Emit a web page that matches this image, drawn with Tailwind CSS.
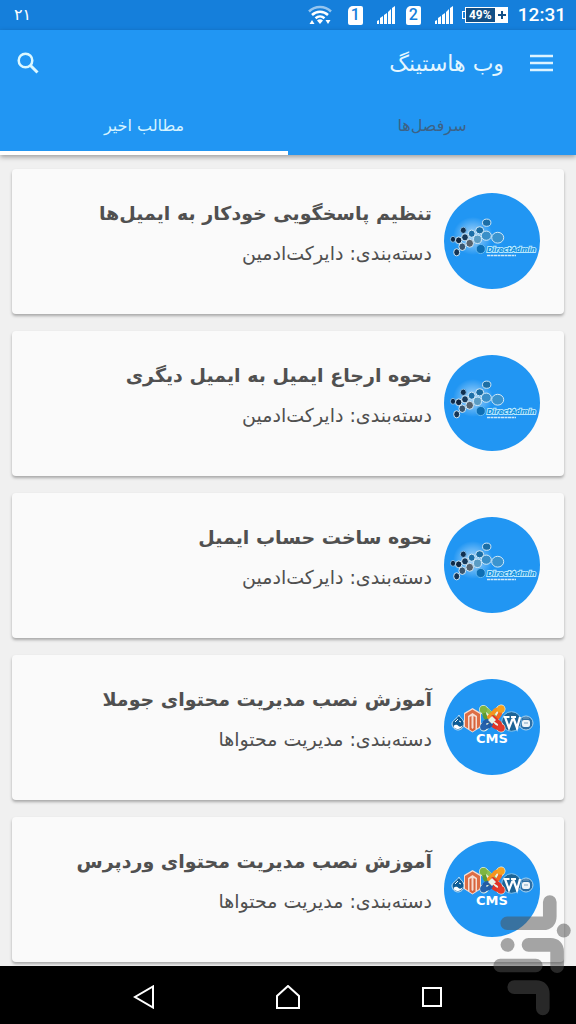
<!DOCTYPE html>
<html lang="fa" dir="rtl">
<head>
    <meta charset="UTF-8">
    <meta name="viewport" content="width=device-width, initial-scale=1.0">
    <title>وب هاستینگ</title>
    <script src="https://cdn.jsdelivr.net/npm/@tailwindcss/browser@4"></script>
</head>
<body class="bg-[#f0f0f0] font-['DejaVu_Sans',sans-serif] text-[#505050]">
    <!-- Shared drawings -->
    <svg class="absolute size-0" aria-hidden="true">
        <defs>
            <radialGradient id="glow">
                <stop offset="0" stop-color="#fff" stop-opacity=".65"/>
                <stop offset="1" stop-color="#fff" stop-opacity="0"/>
            </radialGradient>
        </defs>
        <symbol id="signal" viewBox="0 0 18 18">
            <path fill="#fff" d="M0 18v-3l2-1v4zM3 18v-6l3-2v8zM7 18V9l3-2v11zM11 18V6l3-3v15zM15 18V2l3-2v18z"/>
        </symbol>
        <symbol id="directadmin" viewBox="0 0 96 96">
            <ellipse cx="29" cy="43" rx="20" ry="19" fill="url(#glow)"/>
            <g stroke="#cfe8f8" stroke-width="1">
                <ellipse cx="42.700" cy="29.700" rx="4.200" ry="3.600" fill="#1c6ea6"/>
                <ellipse cx="35.700" cy="37.300" rx="4" ry="3.600" fill="#1b6da4"/>
                <ellipse cx="19.300" cy="37.300" rx="3" ry="3.200" fill="#12304f" stroke="#7fb9e6"/>
                <ellipse cx="27.700" cy="40.700" rx="3.400" ry="3.600" fill="#1d6fa8"/>
                <ellipse cx="42.300" cy="42.700" rx="5" ry="4.600" fill="#3a8fc8"/>
                <ellipse cx="53.700" cy="44.700" rx="6" ry="5.400" fill="#3b94cf"/>
                <ellipse cx="21" cy="44.300" rx="3.400" ry="3.600" fill="#17395a"/>
                <ellipse cx="33.500" cy="46.300" rx="4" ry="4.200" fill="#5a9cc4"/>
                <ellipse cx="9" cy="46.300" rx="2.600" ry="3" fill="#0f2947" stroke="#7fb9e6"/>
                <ellipse cx="14.700" cy="47.300" rx="3.200" ry="3.400" fill="#0f2642"/>
                <ellipse cx="25.700" cy="50.300" rx="3.800" ry="4" fill="#55626e"/>
                <ellipse cx="18.300" cy="53.700" rx="3.400" ry="3.800" fill="#38556f"/>
                <ellipse cx="12.700" cy="59.300" rx="3" ry="3.600" fill="#153454"/>
                <ellipse cx="36.700" cy="56" rx="4.600" ry="4.600" fill="#0e6fb4" stroke="#63b9f2"/>
            </g>
            <path d="M43 62.500h29" stroke="#cfe8f8" stroke-width="1.500" stroke-dasharray="3 .5"/>
        </symbol>
        <symbol id="cms" viewBox="0 0 96 96">
            <!-- Drupal -->
            <path d="M15 36c1 3 5 4 5 9a6 6 0 0 1-12 0c0-4 5-5 7-9z" fill="#0d5c96" stroke="#bfe0f7" stroke-width="1"/>
            <path d="M9.500 47c2-2 4-1 5 0s3 1 4-1c0 3-3 4-5 4s-4-1-4-3z" fill="#fff"/>
            <path d="M11 43l3-3M15 42l2 1" stroke="#fff" stroke-width="1"/>
            <!-- Database -->
            <circle cx="82" cy="44" r="7" fill="#2c6fa6" stroke="#a9d5f3" stroke-width="1"/>
            <rect x="78" y="41" width="8" height="7" rx="2" fill="#eef4f8"/>
            <path d="M80 44h4M79 39h6" stroke="#7fa3bf" stroke-width="1"/>
            <!-- Magento -->
            <path d="M28.500 29l8.500 5v14l-8.500 5.500L20 48V34z" fill="#f6ddd2"/>
            <path d="M28.500 30.500l7.500 4.500v12.500l-3 2V37l-4.500-3-4.500 3v12.500l-3-2V35z" fill="#dd6d45"/>
            <path d="M25.500 38l2-1v12l1 1 1-1V37l2 1v12.500l-3 2-3-2z" fill="#d7633d"/>
            <!-- WordPress -->
            <circle cx="67.500" cy="42.500" r="9.800" fill="#1d6496" stroke="#7fc2ef" stroke-width="1"/>
            <path d="M59.500 38h6M67 38h5M61 38l4 11 3.500-9M69 38l4 11 3-11" fill="none" stroke="#fff" stroke-width="2.200"/>
            <!-- Joomla -->
            <g fill="none" stroke-linecap="round" stroke-linejoin="round">
                <path d="M39.500 30.500L57 49M57 30L40 48" stroke="#e8f2e6" stroke-width="9"/>
                <path d="M40 32c2-2 4-1 5 1l5 4" stroke="#8cc152" stroke-width="4"/>
                <path d="M40 32c0 3 0 5 2 7l4 4" stroke="#5d9a34" stroke-width="4"/>
                <path d="M56 31c-3-1-5 0-6 2l-5 5" stroke="#f5931e" stroke-width="4"/>
                <path d="M56 31c1 3 0 5-2 7l-3 3" stroke="#f06a22" stroke-width="4"/>
                <path d="M56 48c1-3-1-5-3-6l-4-4M55 49c-3 0-5-1-8-5" stroke="#de3427" stroke-width="4"/>
                <path d="M40 47c-1-3 1-5 4-5M41 48c3 0 5-1 6-3" stroke="#235ca6" stroke-width="4"/>
            </g>
            <path d="M48 37l4 4-4 4-4-4z" fill="#e8f2e6"/>
            <circle cx="39.500" cy="30.500" r="3.800" fill="#7fb541"/>
            <circle cx="57" cy="30" r="3.800" fill="#f6a01f"/>
            <circle cx="57" cy="49" r="3.800" fill="#e43b2b"/>
            <circle cx="39.500" cy="48" r="3.400" fill="#2562ad"/>
        </symbol>
    </svg>

    <div class="relative flex h-screen flex-col overflow-hidden">
        <!-- Status bar -->
        <div dir="ltr" class="flex h-[30px] shrink-0 items-center justify-between bg-[#157fdb] px-[14px] text-white">
            <span class="text-base">۲۱</span>
            <div class="-mr-1 flex items-center font-[Roboto,sans-serif]">
                <svg class="mr-4 h-5 w-6" viewBox="0 0 24 20">
                    <g fill="none" stroke="#fff" stroke-width="2.500">
                        <path d="M1 6.500a16 16 0 0 1 22 0" opacity=".55"/>
                        <path d="M4 10a11.500 11.500 0 0 1 16 0"/>
                        <path d="M7.500 13.200a7 7 0 0 1 9 0"/>
                    </g>
                    <path fill="#fff" d="M9 15.500a4 4 0 0 1 6 0l-3 3.500zM4 15l2.500 4h-5zM17.500 15h5L20 19z"/>
                </svg>
                <span class="mr-[14px] flex h-[19px] w-[15px] items-center justify-center rounded-[2px] rounded-tl-[5px] bg-white text-base font-medium text-[#157fdb]">1</span>
                <svg class="mr-[11px] size-[18px]"><use href="#signal"/></svg>
                <span class="mr-[14px] flex h-[19px] w-[15px] items-center justify-center rounded-[2px] rounded-tl-[5px] bg-white text-base font-medium text-[#157fdb]">2</span>
                <svg class="mr-[9px] size-[18px]"><use href="#signal"/></svg>
                <div class="mr-[10px] flex items-center">
                    <span class="h-2 w-[3px] border border-r-0 border-white"></span>
                    <span class="flex h-4 w-[31px] items-center justify-center border border-white bg-[#124f86] text-xs font-bold">49%</span>
                    <span class="flex h-4 w-3 items-center justify-center bg-white">
                        <svg class="size-[10px]" viewBox="0 0 10 10"><path d="M5 1v8M1 5h8" stroke="#124f86" stroke-width="2"/></svg>
                    </span>
                </div>
                <span class="text-[19px] font-medium">12:31</span>
            </div>
        </div>

        <!-- Toolbar and tabs -->
        <header class="z-10 shrink-0 bg-[#2196f3] shadow-[0_2px_5px_rgba(0,0,0,0.35)]">
            <div class="flex h-[66px] items-center px-4">
                <button type="button" aria-label="منو" class="flex size-9 items-center justify-center">
                    <svg class="h-[18px] w-6" viewBox="0 0 24 18"><path d="M0 2h23M0 9h23M0 16h23" stroke="#dcf3ff" stroke-width="2.500"/></svg>
                </button>
                <h1 class="mr-5 text-[22px] text-[#e4f6ff]">وب هاستینگ</h1>
                <button type="button" aria-label="جستجو" class="mr-auto flex size-6 items-center justify-center">
                    <svg class="size-6" viewBox="0 0 24 24" fill="none" stroke="#dcf8ff" stroke-width="2.500">
                        <circle cx="9.500" cy="9.500" r="6.800"/>
                        <path d="M14.500 14.500l7 7" stroke-width="3"/>
                    </svg>
                </button>
            </div>
            <nav class="grid h-[59px] grid-cols-2 text-center text-base">
                <a href="#" class="flex items-center justify-center text-[#3d6285]">سرفصل‌ها</a>
                <a href="#" class="flex items-center justify-center border-b-4 border-white pt-1 text-[#d5f3ff]">مطالب اخیر</a>
            </nav>
        </header>

        <!-- Posts -->
        <main class="flex min-h-0 flex-1 flex-col gap-[17px] overflow-hidden px-3 pt-[14px]">
            <article class="flex h-[145px] shrink-0 gap-3 rounded-[4px] bg-[#fafafa] px-6 py-6 shadow-[0_2px_3px_rgba(0,0,0,0.3)]">
                <svg dir="ltr" class="size-24 shrink-0 rounded-full bg-[#2196f3]" viewBox="0 0 96 96">
                    <use href="#directadmin"/>
                    <text x="43" y="59" direction="ltr" class="text-[7px] font-bold italic" fill="#0d8fdc" stroke="#b5e6ff" stroke-width="2" paint-order="stroke">DirectAdmin</text>
                </svg>
                <div>
                    <h2 class="text-[19px] leading-10 font-bold">تنظیم پاسخگویی خودکار به ایمیل‌ها</h2>
                    <p class="text-[19px] leading-10">دسته‌بندی: دایرکت‌ادمین</p>
                </div>
            </article>
            <article class="flex h-[145px] shrink-0 gap-3 rounded-[4px] bg-[#fafafa] px-6 py-6 shadow-[0_2px_3px_rgba(0,0,0,0.3)]">
                <svg dir="ltr" class="size-24 shrink-0 rounded-full bg-[#2196f3]" viewBox="0 0 96 96">
                    <use href="#directadmin"/>
                    <text x="43" y="59" direction="ltr" class="text-[7px] font-bold italic" fill="#0d8fdc" stroke="#b5e6ff" stroke-width="2" paint-order="stroke">DirectAdmin</text>
                </svg>
                <div>
                    <h2 class="text-[19px] leading-10 font-bold">نحوه ارجاع ایمیل به ایمیل دیگری</h2>
                    <p class="text-[19px] leading-10">دسته‌بندی: دایرکت‌ادمین</p>
                </div>
            </article>
            <article class="flex h-[145px] shrink-0 gap-3 rounded-[4px] bg-[#fafafa] px-6 py-6 shadow-[0_2px_3px_rgba(0,0,0,0.3)]">
                <svg dir="ltr" class="size-24 shrink-0 rounded-full bg-[#2196f3]" viewBox="0 0 96 96">
                    <use href="#directadmin"/>
                    <text x="43" y="59" direction="ltr" class="text-[7px] font-bold italic" fill="#0d8fdc" stroke="#b5e6ff" stroke-width="2" paint-order="stroke">DirectAdmin</text>
                </svg>
                <div>
                    <h2 class="text-[19px] leading-10 font-bold">نحوه ساخت حساب ایمیل</h2>
                    <p class="text-[19px] leading-10">دسته‌بندی: دایرکت‌ادمین</p>
                </div>
            </article>
            <article class="flex h-[145px] shrink-0 gap-3 rounded-[4px] bg-[#fafafa] px-6 py-6 shadow-[0_2px_3px_rgba(0,0,0,0.3)]">
                <svg dir="ltr" class="size-24 shrink-0 rounded-full bg-[#2196f3]" viewBox="0 0 96 96">
                    <use href="#cms"/>
                    <text x="48" y="64" text-anchor="middle" class="text-[13px] font-bold" fill="#fff">CMS</text>
                </svg>
                <div>
                    <h2 class="text-[19px] leading-10 font-bold">آموزش نصب مدیریت محتوای جوملا</h2>
                    <p class="text-[19px] leading-10">دسته‌بندی: مدیریت محتواها</p>
                </div>
            </article>
            <article class="flex h-[145px] shrink-0 gap-3 rounded-[4px] bg-[#fafafa] px-6 py-6 shadow-[0_2px_3px_rgba(0,0,0,0.3)]">
                <svg dir="ltr" class="size-24 shrink-0 rounded-full bg-[#2196f3]" viewBox="0 0 96 96">
                    <use href="#cms"/>
                    <text x="48" y="64" text-anchor="middle" class="text-[13px] font-bold" fill="#fff">CMS</text>
                </svg>
                <div>
                    <h2 class="text-[19px] leading-10 font-bold">آموزش نصب مدیریت محتوای وردپرس</h2>
                    <p class="text-[19px] leading-10">دسته‌بندی: مدیریت محتواها</p>
                </div>
            </article>
        </main>

        <!-- System navigation -->
        <nav dir="ltr" class="z-10 flex h-[58px] shrink-0 items-center justify-center gap-[120px] bg-black pt-1">
            <button type="button" aria-label="بازگشت" class="flex size-6 items-center justify-center">
                <svg class="size-6" viewBox="0 0 24 24" fill="none" stroke="#fff" stroke-width="2"><path d="M21 1.500v21L3 12z"/></svg>
            </button>
            <button type="button" aria-label="خانه" class="flex size-6 items-center justify-center">
                <svg class="size-6" viewBox="0 0 24 24" fill="none" stroke="#fff" stroke-width="2"><path d="M1 23V11L12 1l11 10v12z"/></svg>
            </button>
            <button type="button" aria-label="برنامه‌ها" class="flex size-6 items-center justify-center">
                <svg class="size-6" viewBox="0 0 24 24" fill="none" stroke="#fff" stroke-width="2"><path d="M3 3h18v18H3z"/></svg>
            </button>
        </nav>

        <!-- Store watermark -->
        <svg class="pointer-events-none absolute right-1 bottom-2 z-20 h-[121px] w-[79px] opacity-50" viewBox="188 226 236 364" fill="none" stroke="#505050" stroke-width="41" stroke-linecap="round">
            <path d="M230 311h108q20 0 20-20v-44M294 376h66q20 0 20 20v44M209 438h107M251 503h66q20 0 20 20v44"/>
            <circle cx="231" cy="376" r="21" fill="#505050" stroke="none"/>
            <circle cx="400" cy="333" r="21" fill="#505050" stroke="none"/>
        </svg>
    </div>
</body>
</html>
